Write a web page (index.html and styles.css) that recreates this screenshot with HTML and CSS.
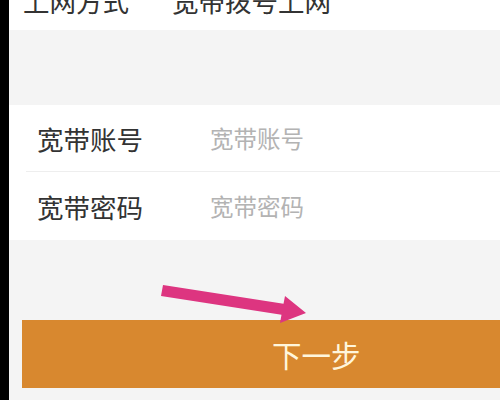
FILE: index.html
```html
<!DOCTYPE html>
<html lang="zh">
<head>
<meta charset="utf-8">
<link rel="stylesheet" href="styles.css">
</head>
<body>
<div class="screen">
  <div class="top-row">
    <span class="top-label">上网方式</span>
    <span class="top-value">宽带拨号上网</span>
  </div>
  <div class="form">
    <div class="row row-first">
      <span class="label">宽带账号</span>
      <span class="placeholder">宽带账号</span>
    </div>
    <div class="sep"></div>
    <div class="row row-second">
      <span class="label">宽带密码</span>
      <span class="placeholder">宽带密码</span>
    </div>
  </div>
  <div class="btn">下一步</div>
</div>
<svg class="arrow" width="500" height="400" viewBox="0 0 500 400">
  <polygon points="163,285 283.5,303.8 285,296 306,313 280,323 281.5,314.8 161,296" fill="#dd3580"/>
</svg>
</body>
</html>
```
FILE: styles.css
```css
html, body {
  margin: 0;
  padding: 0;
}
body {
  width: 500px;
  height: 400px;
  overflow: hidden;
  background: #000;
  font-family: "Noto Sans CJK SC", "Noto Sans", sans-serif;
  position: relative;
}
.screen {
  margin-left: 9px;
  height: 400px;
  background: #f4f4f4;
  display: flex;
  flex-direction: column;
}
.top-row {
  height: 30px;
  background: #fff;
  display: flex;
  align-items: flex-start;
  overflow: hidden;
  font-size: 26.5px;
  line-height: 26px;
  color: #333;
}
.top-row span {
  margin-top: -12.5px;
}
.top-label {
  margin-left: 14px;
  width: 149px;
}
.form {
  margin-top: 75px;
  background: #fff;
  display: flex;
  flex-direction: column;
}
.row {
  display: flex;
  align-items: center;
}
.row-first { height: 66px; }
.row-second { height: 68px; }
.sep {
  height: 1px;
  margin-left: 17px;
  background: #eeeeee;
}
.label {
  margin-left: 28px;
  width: 173px;
  font-size: 26.5px;
  color: #333;
}
.placeholder {
  font-size: 23.5px;
  color: #b3b3b3;
}
.btn {
  margin-top: 80px;
  margin-left: 13px;
  height: 68px;
  background: #d8882f;
  color: #fff6dc;
  font-size: 29.5px;
  display: flex;
  align-items: center;
  padding-left: 250px;
}
.arrow {
  position: absolute;
  left: 0;
  top: 0;
}
```
